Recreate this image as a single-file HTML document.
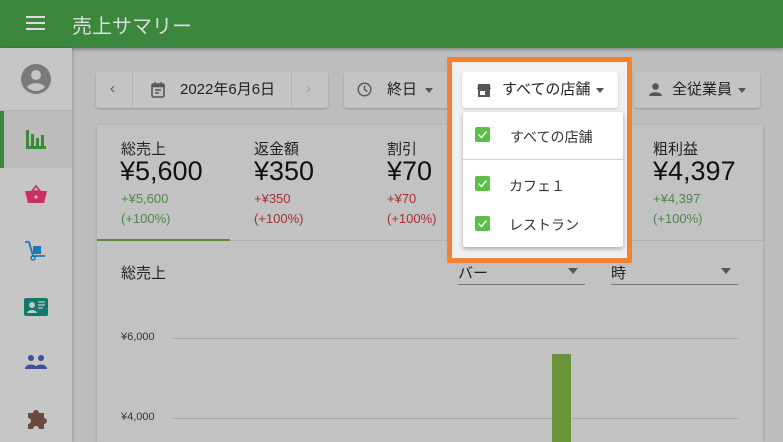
<!DOCTYPE html>
<html style="width:783px;height:442px;overflow:hidden"><head><meta charset="utf-8"><style>
*{box-sizing:border-box;margin:0;padding:0}
body{width:783px;height:442px;overflow:hidden;background:#bdbdbd;font-family:"Liberation Sans","Noto Sans CJK JP",sans-serif;position:relative;color:#1a1a1a}
.abs{position:absolute}
.hdr{left:0;top:0;width:783px;height:48px;background:#3b873d;box-shadow:0 2px 3px rgba(0,0,0,.25)}
.side{left:0;top:48px;width:72px;height:394px;background:#c6c6c6;box-shadow:1px 0 3px rgba(0,0,0,.2)}
.btn{background:#c4c4c4;border-radius:3px;box-shadow:0 1px 2px rgba(0,0,0,.2);height:36px;top:72px}
.card{left:97px;top:125px;width:666px;height:317px;background:#c2c2c2;box-shadow:0 1px 3px rgba(0,0,0,.2)}
.lab{font-size:15px;color:#222}
.val{font-size:27px;color:#111}
.sub{font-size:13px}
.g{color:#4a8a4a}.r{color:#a83030}
.t{font-size:15px;color:#222;line-height:1}
</style></head><body>
<div class="abs hdr"></div>
<div class="abs" style="left:26px;top:16px;width:19px;height:2px;background:#ddd;box-shadow:0 6px 0 #ddd,0 12px 0 #ddd"></div>
<div class="abs" style="left:72px;top:10px;font-size:20px;color:#ddd">売上サマリー</div>

<div class="abs side"></div>
<div class="abs" style="left:0;top:110px;width:72px;height:1px;background:#b4b4b4"></div>
<div class="abs" style="left:0;top:111px;width:72px;height:57px;background:#bcbcbc"></div>
<div class="abs" style="left:0;top:111px;width:4px;height:57px;background:#3b873d"></div>
<svg class="abs" style="left:21px;top:64px" width="30" height="30" viewBox="0 0 30 30"><circle cx="15" cy="15" r="15" fill="#7a7a7a"/><circle cx="15" cy="11" r="5" fill="#c6c6c6"/><path d="M6 23c3-5 15-5 18 0c-3 3-6 4-9 4s-6-1-9-4z" fill="#c6c6c6"/></svg>
<svg class="abs" style="left:26px;top:130px" width="20" height="19"><path d="M0 0h3v19H0zM0 16h20v3H0zM5 4h3v15H5zM10 8h3v11h-3zM15 5h3v14h-3z" fill="#3a8a3a"/></svg>
<svg class="abs" style="left:25px;top:185px" width="22" height="18"><path d="M7 6L11 1 15 6z" fill="none" stroke="#c8305f" stroke-width="1.6"/><path d="M0 6h22l-3 12H3z" fill="#c8305f"/><circle cx="11" cy="12" r="1.6" fill="#c6c6c6"/></svg>
<svg class="abs" style="left:24px;top:241px" width="24" height="20"><path d="M1 1h4l4 14h12" fill="none" stroke="#1a7ab8" stroke-width="1.8"/><rect x="9" y="5" width="8" height="8" fill="#1a7ab8"/><circle cx="9" cy="17" r="2" fill="none" stroke="#1a7ab8" stroke-width="1.5"/></svg>
<svg class="abs" style="left:24px;top:298px" width="24" height="18"><rect width="24" height="18" rx="2" fill="#0e7a6a"/><circle cx="8" cy="7" r="3" fill="#c6c6c6"/><path d="M3 15c1-4 9-4 10 0z" fill="#c6c6c6"/><path d="M14 4h7M14 7h7M14 10h5" stroke="#c6c6c6" stroke-width="1.3"/></svg>
<svg class="abs" style="left:25px;top:355px" width="22" height="14"><circle cx="6" cy="3" r="3" fill="#3f4f9a"/><circle cx="16" cy="3" r="3" fill="#3f4f9a"/><path d="M0 14c0-6 12-6 12 0zM10 14c0-6 12-6 12 0z" fill="#3f4f9a"/></svg>
<svg class="abs" style="left:26px;top:408px" width="21" height="21"><path d="M2 5h5a3 3 0 0 1 6 0h5v5a3 3 0 0 1 0 6v5h-5a3 3 0 0 0-6 0H2v-5a3 3 0 0 0 0-6z" fill="#6a4a40"/></svg>

<div class="abs btn" style="left:96px;width:232px"></div>
<div class="abs" style="left:132px;top:72px;width:1px;height:36px;background:#b2b2b2"></div>
<div class="abs" style="left:291px;top:72px;width:1px;height:36px;background:#b2b2b2"></div>
<div class="abs" style="left:110px;top:80px;font-size:15px;color:#555">‹</div>
<div class="abs" style="left:306px;top:80px;font-size:15px;color:#999">›</div>
<svg class="abs" style="left:151px;top:82px" width="14" height="16"><rect x="1" y="2" width="12" height="13" rx="1.5" fill="none" stroke="#555" stroke-width="1.6"/><path d="M1 4h12" stroke="#555" stroke-width="2.5"/><path d="M4 0v3M10 0v3M4 8h6M4 11h4" stroke="#555" stroke-width="1.4"/></svg>
<div class="abs t" style="left:180px;top:82px">2022年6月6日</div>

<div class="abs btn" style="left:344px;width:110px"></div>
<svg class="abs" style="left:357px;top:82px" width="15" height="15"><circle cx="7.5" cy="7.5" r="6.3" fill="none" stroke="#555" stroke-width="1.4"/><path d="M7.5 3.5v4.2l3 1.8" fill="none" stroke="#555" stroke-width="1.4"/></svg>
<div class="abs t" style="left:387px;top:82px">終日</div>
<div class="abs" style="left:425px;top:88px;border:4px solid transparent;border-top:5px solid #555"></div>

<div class="abs btn" style="left:634px;width:126px"></div>
<svg class="abs" style="left:649px;top:83px" width="13" height="13"><circle cx="6.5" cy="3.5" r="3.3" fill="#555"/><path d="M0 13c0-5 13-5 13 0z" fill="#555"/></svg>
<div class="abs t" style="left:672px;top:82px">全従業員</div>
<div class="abs" style="left:738px;top:88px;border:4px solid transparent;border-top:5px solid #555"></div>

<div class="abs card"></div>
<div class="abs" style="left:97px;top:240px;width:666px;height:1px;background:#b0b0b0"></div>
<div class="abs" style="left:97px;top:239px;width:133px;height:2px;background:#5c8a30"></div>
<div class="abs lab" style="left:121px;top:138px">総売上</div>
<div class="abs val" style="left:120px;top:156px">¥5,600</div>
<div class="abs sub g" style="left:121px;top:191px">+¥5,600</div>
<div class="abs sub g" style="left:121px;top:211px">(+100%)</div>
<div class="abs lab" style="left:254px;top:138px">返金額</div>
<div class="abs val" style="left:254px;top:156px">¥350</div>
<div class="abs sub r" style="left:254px;top:191px">+¥350</div>
<div class="abs sub r" style="left:254px;top:211px">(+100%)</div>
<div class="abs lab" style="left:387px;top:138px">割引</div>
<div class="abs val" style="left:387px;top:156px">¥70</div>
<div class="abs sub r" style="left:387px;top:191px">+¥70</div>
<div class="abs sub r" style="left:387px;top:211px">(+100%)</div>
<div class="abs lab" style="left:653px;top:138px">粗利益</div>
<div class="abs val" style="left:653px;top:156px">¥4,397</div>
<div class="abs sub g" style="left:653px;top:191px">+¥4,397</div>
<div class="abs sub g" style="left:653px;top:211px">(+100%)</div>

<div class="abs" style="left:121px;top:262px;font-size:15px;color:#222">総売上</div>
<div class="abs" style="left:458px;top:262px;font-size:15px;color:#222">バー</div>
<div class="abs" style="left:568px;top:268px;border:5px solid transparent;border-top:6px solid #555"></div>
<div class="abs" style="left:458px;top:284px;width:127px;height:1px;background:#777"></div>
<div class="abs" style="left:611px;top:262px;font-size:15px;color:#222">時</div>
<div class="abs" style="left:721px;top:268px;border:5px solid transparent;border-top:6px solid #555"></div>
<div class="abs" style="left:611px;top:284px;width:127px;height:1px;background:#777"></div>
<div class="abs" style="left:121px;top:331px;font-size:11px;color:#333">¥6,000</div>
<div class="abs" style="left:173px;top:338px;width:565px;height:1px;background:#aaa"></div>
<div class="abs" style="left:121px;top:411px;font-size:11px;color:#333">¥4,000</div>
<div class="abs" style="left:173px;top:418px;width:565px;height:1px;background:#aaa"></div>
<div class="abs" style="left:552px;top:354px;width:19px;height:88px;background:#6a9437"></div>

<div class="abs" style="left:447px;top:57px;width:185px;height:206px;border:5px solid #f08232;background:#f0f0f0"></div>
<div class="abs" style="left:462px;top:72px;width:156px;height:36px;background:#fff;border-radius:3px;box-shadow:0 1px 2px rgba(0,0,0,.2)"></div>
<svg class="abs" style="left:477px;top:84px" width="14" height="13"><path d="M1 0h12v2l1 3H0l1-3z" fill="#555"/><path d="M1 5h12v8H1z" fill="#555"/><path d="M3 7h5v4H3z" fill="#fff"/></svg>
<div class="abs t" style="left:502px;top:82px">すべての店舗</div>
<div class="abs" style="left:596px;top:88px;border:4px solid transparent;border-top:5px solid #555"></div>
<div class="abs" style="left:463px;top:112px;width:160px;height:135px;background:#fff;border-radius:2px;box-shadow:0 2px 5px rgba(0,0,0,.3)"></div>
<div class="abs" style="left:463px;top:159px;width:160px;height:1px;background:#d0d0d0"></div>
<svg class="abs" style="left:475px;top:127px" width="15" height="15"><rect width="15" height="15" rx="2" fill="#5cbf4a"/><path d="M3.5 7.5l3 3 5-6" fill="none" stroke="#fff" stroke-width="1.4"/></svg>
<svg class="abs" style="left:475px;top:176px" width="15" height="15"><rect width="15" height="15" rx="2" fill="#5cbf4a"/><path d="M3.5 7.5l3 3 5-6" fill="none" stroke="#fff" stroke-width="1.4"/></svg>
<svg class="abs" style="left:475px;top:216px" width="15" height="15"><rect width="15" height="15" rx="2" fill="#5cbf4a"/><path d="M3.5 7.5l3 3 5-6" fill="none" stroke="#fff" stroke-width="1.4"/></svg>
<div class="abs" style="left:510px;top:127px;font-size:14px;color:#333">すべての店舗</div>
<div class="abs" style="left:509px;top:176px;font-size:14px;color:#333">カフェ１</div>
<div class="abs" style="left:509px;top:215px;font-size:14px;color:#333">レストラン</div>
</body></html>
